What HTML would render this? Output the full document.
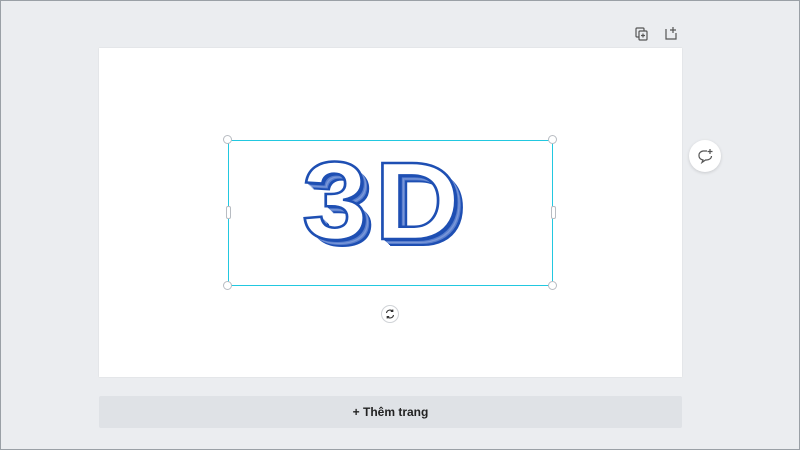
<!DOCTYPE html>
<html><head><style>
html,body{margin:0;padding:0;}
body{width:800px;height:450px;background:#ebedf0;position:relative;overflow:hidden;font-family:"Liberation Sans",sans-serif;}
.frame{position:absolute;left:0;top:0;width:798px;height:448px;border:1px solid #9aa0a6;}
.canvas{position:absolute;left:99px;top:48px;width:583px;height:329px;background:#fff;box-shadow:0 0 1px rgba(0,0,0,.15);}
.sel{position:absolute;left:228px;top:140px;width:325px;height:146px;border:1px solid #22c8e0;box-sizing:border-box;}
.h{position:absolute;width:9px;height:9px;border-radius:50%;background:#fff;border:1px solid #b8bcc2;box-sizing:border-box;}
.s{position:absolute;width:5px;height:13px;border-radius:2px;background:#fff;border:1px solid #b8bcc2;box-sizing:border-box;}
.txt{position:absolute;left:302px;top:147px;font-size:110px;font-weight:900;color:#fff;-webkit-text-stroke:2.5px #1e4fb3;letter-spacing:6px;line-height:1;transform:scaleX(1.08);transform-origin:left top;
text-shadow:1px 1px 0 #1e4fb3,2px 2px 0 #1e4fb3,3px 3px 0 #5a7fce,4px 4px 0 #7b98d8,5px 5px 0 #5a7fce,6px 6px 0 #1e4fb3,7px 7px 0 #1e4fb3;}
.btn{position:absolute;left:99px;top:396px;width:583px;height:32px;background:#dfe2e6;border-radius:2px;text-align:center;line-height:32px;font-size:12px;font-weight:bold;color:#222;}
.rot{position:absolute;left:381px;top:305px;width:18px;height:18px;border-radius:50%;background:#fff;border:1px solid #d0d3d7;box-sizing:border-box;}
.cm{position:absolute;left:689px;top:140px;width:32px;height:32px;border-radius:50%;background:#fff;box-shadow:0 1px 3px rgba(0,0,0,.15);}
</style></head><body>
<div class="frame"></div>
<svg style="position:absolute;left:633px;top:25px" width="18" height="18" viewBox="0 0 18 18" fill="none" stroke="#555" stroke-width="1.2"><rect x="3" y="3" width="8" height="9" rx="1"/><rect x="6" y="6" width="8" height="9" rx="1" fill="#ebedf0"/><path d="M10 8.5v4M8 10.5h4"/></svg>
<svg style="position:absolute;left:662px;top:24px" width="18" height="18" viewBox="0 0 18 18" fill="none" stroke="#555" stroke-width="1.2"><path d="M4 5v10h10V9M11 3v6M8 6h6"/></svg>
<div class="canvas"></div>
<div class="txt">3D</div>
<div class="sel"></div>
<div class="h" style="left:223px;top:135px"></div>
<div class="h" style="left:548px;top:135px"></div>
<div class="h" style="left:223px;top:281px"></div>
<div class="h" style="left:548px;top:281px"></div>
<div class="s" style="left:226px;top:206px"></div>
<div class="s" style="left:551px;top:206px"></div>
<div class="rot"><svg width="16" height="16" viewBox="0 0 16 16" fill="none" stroke="#333" stroke-width="1.1" style="position:absolute;left:0;top:0"><path d="M4.5 7a3.5 3.5 0 0 1 6.3-1.5M11.5 9a3.5 3.5 0 0 1-6.3 1.5M10.8 3.5v2h-2M5.2 12.5v-2h2"/></svg></div>
<div class="cm"><svg width="32" height="32" viewBox="0 0 32 32" fill="none" stroke="#555" stroke-width="1.2"><path d="M18 11h-4a5 4 0 0 0-4 4v1a5 4 0 0 0 4 4h0l-1 2.5 3.5-2.5h1a5 4 0 0 0 5-4"/><path d="M21 9v5M18.5 11.5h5"/></svg></div>
<div class="btn">+ Thêm trang</div>
</body></html>
